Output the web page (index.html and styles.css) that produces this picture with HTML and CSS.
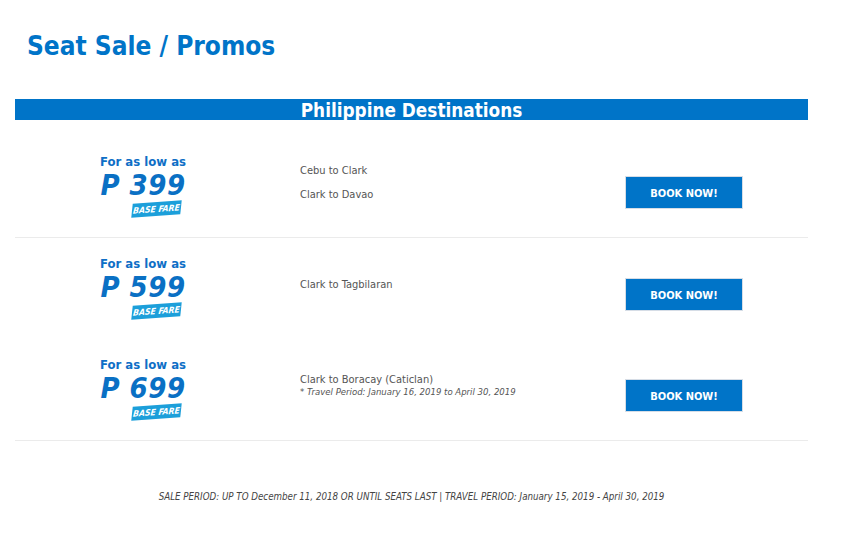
FILE: index.html
```html
<!DOCTYPE html>
<html>
<head>
<meta charset="utf-8">
<link rel="stylesheet" href="styles.css">
</head>
<body>
<div class="page">
  <h1 class="title">Seat Sale / Promos</h1>
  <div class="bar">Philippine Destinations</div>
  <div class="rows">
    <div class="row bordered">
      <div class="price-col">
        <div class="low">For as low as</div>
        <div class="price">P 399</div>
        <div class="badge"><span>BASE FARE</span></div>
      </div>
      <div class="routes">
        <p class="route">Cebu to Clark</p>
        <p class="route">Clark to Davao</p>
      </div>
      <div class="btn-col"><a class="btn">BOOK NOW!</a></div>
    </div>
    <div class="row">
      <div class="price-col">
        <div class="low">For as low as</div>
        <div class="price">P 599</div>
        <div class="badge"><span>BASE FARE</span></div>
      </div>
      <div class="routes">
        <p class="route">Clark to Tagbilaran</p>
      </div>
      <div class="btn-col"><a class="btn">BOOK NOW!</a></div>
    </div>
    <div class="row bordered">
      <div class="price-col">
        <div class="low">For as low as</div>
        <div class="price">P 699</div>
        <div class="badge"><span>BASE FARE</span></div>
      </div>
      <div class="routes">
        <p class="route tight">Clark to Boracay (Caticlan)</p>
        <p class="note">*<em> Travel Period: January 16, 2019 to April 30, 2019</em></p>
      </div>
      <div class="btn-col"><a class="btn">BOOK NOW!</a></div>
    </div>
  </div>
  <p class="footer">SALE PERIOD: UP TO December 11, 2018 OR UNTIL SEATS LAST | TRAVEL PERIOD: January 15, 2019 - April 30, 2019</p>
</div>
</body>
</html>
```
FILE: styles.css
```css
html, body {
  margin: 0;
  padding: 0;
  background: #fff;
}
body {
  font-family: "DejaVu Sans Condensed", "DejaVu Sans", sans-serif;
  color: #555;
}
.page {
  width: 793px;
  margin-left: 15px;
  padding-top: 30px;
}
.title {
  margin: 0 0 0 12px;
  font-size: 26px;
  line-height: 32px;
  font-weight: bold;
  color: #0074c8;
}
.bar {
  margin-top: 37px;
  height: 21px;
  line-height: 24px;
  overflow: hidden;
  background: #0074c8;
  color: #fff;
  text-align: center;
  font-weight: bold;
  font-size: 18.8px;
}
.rows {
  padding-top: 16px;
}
.row {
  height: 101px;
  display: grid;
  grid-template-columns: 256px 1fr 118px;
  column-gap: 29px;
  padding-right: 65px;
}
.row.bordered {
  border-bottom: 1px solid #ebebeb;
}
.price-col {
  display: flex;
  flex-direction: column;
  align-items: center;
  padding-top: 18px;
}
.low {
  font-weight: bold;
  font-size: 13px;
  line-height: 16px;
  color: #0f6fc6;
}
.price {
  font-weight: bold;
  font-style: italic;
  font-size: 29px;
  line-height: 31px;
  color: #0a70c4;
  letter-spacing: 0.5px;
}
.badge {
  margin-top: 1px;
  margin-left: 26px;
  width: 49px;
  height: 14px;
  background: #1c9fda;
  transform: skewY(-4deg) skewX(-6deg);
  display: flex;
  align-items: center;
  justify-content: center;
}
.badge span {
  font-weight: bold;
  font-style: italic;
  font-size: 8.6px;
  color: #fff;
}
.routes {
  align-self: center;
  padding-bottom: 7px;
  font-size: 11px;
}
.route {
  margin: 0;
  line-height: 24px;
  color: #555;
}
.route.tight {
  line-height: 12px;
}
.note {
  margin: 0;
  font-size: 9.5px;
  line-height: 12px;
  color: #555;
}
.btn-col {
  padding-top: 40px;
}
.btn {
  display: flex;
  box-sizing: border-box;
  width: 118px;
  height: 33px;
  padding-top: 2px;
  align-items: center;
  justify-content: center;
  background: #0074c8;
  border: 1px solid #d6dde6;
  color: #fff;
  font-weight: bold;
  font-size: 11px;
  text-decoration: none;
}
.footer {
  margin: 50px 0 0;
  text-align: center;
  font-style: italic;
  font-size: 9.7px;
  color: #444;
}
```
